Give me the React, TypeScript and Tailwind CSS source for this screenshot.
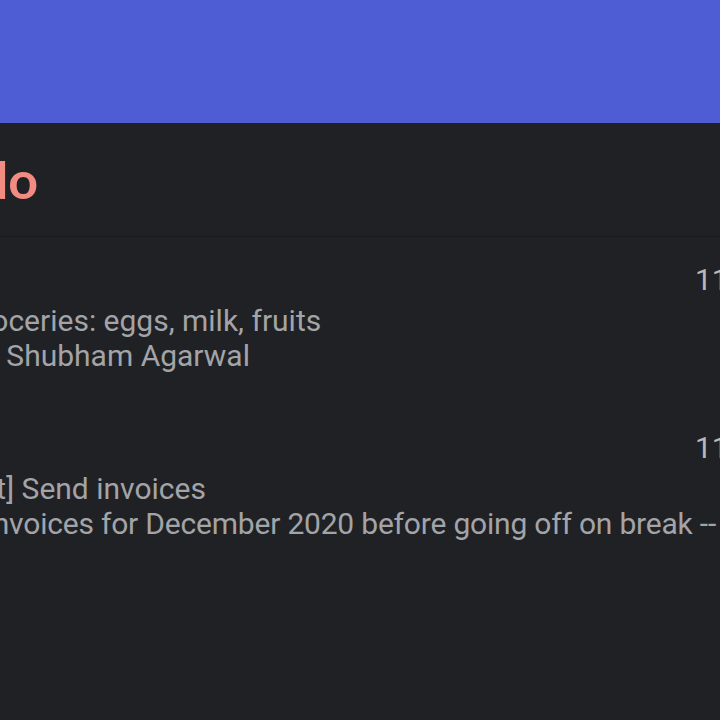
import { Fragment } from "react";

type Note = {
  time: string;
  title: string;
  body: string;
  titleShift: string;
  bodyShift: string;
};

const notes: Note[] = [
  {
    time: "11:02 AM",
    title: "Groceries: eggs, milk, fruits",
    body: "by Shubham Agarwal",
    titleShift: "-ml-[39px]",
    bodyShift: "-ml-[32px]",
  },
  {
    time: "11:45 AM",
    title: "[Urgent] Send invoices",
    body: "Send invoices for December 2020 before going off on break -- finance",
    titleShift: "-ml-[90px]",
    bodyShift: "-ml-[88px] tracking-[-0.2px]",
  },
];

const App = () => {
  return (
    <div
      className="w-[720px] h-[720px] overflow-hidden bg-[#202124] flex flex-col"
      style={{ fontFamily: "Roboto, 'Liberation Sans', sans-serif" }}
    >
      {/* App bar */}
      <header className="h-[123px] shrink-0 bg-[#4f5dd4]" />

      {/* Folder title */}
      <div className="h-[114px] shrink-0 border-b border-[#1a1b1e] flex items-center">
        <h1
          className="-ml-[76px] pb-[2px] text-[52px] leading-none font-bold text-[#f28b82] whitespace-nowrap"
          style={{ fontFamily: "Lato, 'Open Sans', sans-serif" }}
        >
          Todo
        </h1>
      </div>

      {/* Notes */}
      <div className="flex flex-col pt-[24px]">
        {notes.map((note) => (
          <Fragment key={note.title}>
            <div className="h-[168px] flex flex-col text-[30px] leading-[35px] text-[#a3a4a8] whitespace-nowrap">
              <div className="pl-[695px] text-[#b8b9bd] pt-[1px]">{note.time}</div>
              <div className={`pt-[6px] ${note.titleShift}`}>{note.title}</div>
              <div className={note.bodyShift}>{note.body}</div>
            </div>
          </Fragment>
        ))}
      </div>
    </div>
  );
};

export default App;
